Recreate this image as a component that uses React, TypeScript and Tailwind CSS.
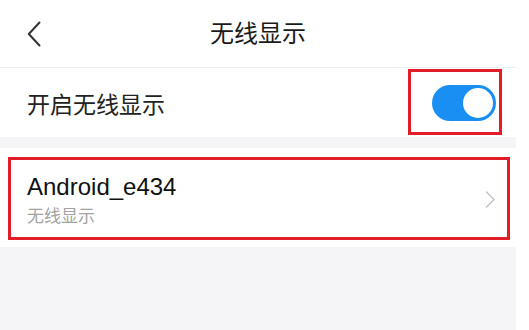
import React from "react";

const cjk = "font-['Noto_Sans_CJK_SC',sans-serif]";

function BackIcon() {
  return (
    <svg width="14" height="26" viewBox="0 0 14 26" className="block">
      <path d="M12.5 1.5 L1.8 13 L12.5 24.5" fill="none" stroke="#333" strokeWidth="2" strokeLinecap="round" strokeLinejoin="round" />
    </svg>
  );
}

function ChevronRight() {
  return (
    <svg width="11" height="17" viewBox="0 0 11 17" className="block">
      <path d="M1.5 1 L9 8.5 L1.5 16" fill="none" stroke="#c6c6c6" strokeWidth="1.6" strokeLinecap="round" strokeLinejoin="round" />
    </svg>
  );
}

function Toggle({ on }: { on: boolean }) {
  return (
    <div className={`w-[64px] h-[36px] rounded-full p-[3px] flex ${on ? "bg-[#1a8ff3] justify-end" : "bg-gray-300 justify-start"}`}>
      <div className="w-[30px] h-[30px] rounded-full bg-white" />
    </div>
  );
}

export default function App() {
  return (
    <div className="w-[529px] h-[330px] bg-white flex overflow-hidden">
      <div className="w-[516px] h-full bg-[#f5f5f7] flex flex-col">
        {/* title bar */}
        <div className="h-[68px] bg-white border-b border-[#ededed] relative flex items-center px-[27px] shrink-0">
          <BackIcon />
          <div className={`absolute left-0 right-0 top-[16px] text-center text-[24px] leading-[32px] text-[#1a1a1a] ${cjk}`}>
            无线显示
          </div>
        </div>

        {/* switch row */}
        <div className="h-[69px] bg-white flex items-center pl-[27px] pr-[20px] relative shrink-0">
          <span className={`text-[23px] leading-[30px] text-[#222] ${cjk}`}>开启无线显示</span>
          <div className="ml-auto">
            <Toggle on />
          </div>
          <div className="absolute left-[408px] top-[1px] w-[94px] h-[66px] border-[3px] border-[#e31d27]" />
        </div>

        {/* device list */}
        <div className="mt-[11px] h-[99px] bg-white relative flex items-center pl-[27px] pr-[20px] shrink-0">
          <div className="flex flex-col pt-[4px]">
            <span className="text-[24px] leading-[28px] text-[#111] font-['Liberation_Sans','Noto_Sans_CJK_SC',sans-serif]">
              Android_e434
            </span>
            <span className={`mt-[3px] text-[17px] leading-[22px] text-[#a3a3a3] ${cjk}`}>无线显示</span>
          </div>
          <div className="ml-auto mt-[3px]">
            <ChevronRight />
          </div>
          <div className="absolute left-[8px] top-[9px] w-[502px] h-[83px] border-[3px] border-[#e31d27]" />
        </div>
      </div>
    </div>
  );
}
